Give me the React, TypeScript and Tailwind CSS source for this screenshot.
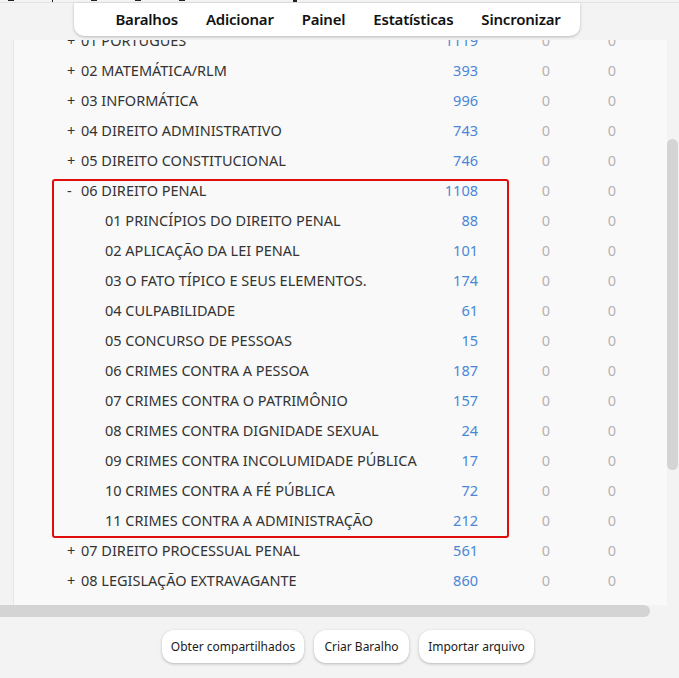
import React from 'react';

type Row = { name: string; count: number; sign?: '+' | '-'; child?: boolean };

const rows: Row[] = [
    { sign: '+', name: '01 PORTUGUÊS', count: 1119 },
    { sign: '+', name: '02 MATEMÁTICA/RLM', count: 393 },
    { sign: '+', name: '03 INFORMÁTICA', count: 996 },
    { sign: '+', name: '04 DIREITO ADMINISTRATIVO', count: 743 },
    { sign: '+', name: '05 DIREITO CONSTITUCIONAL', count: 746 },
    { sign: '-', name: '06 DIREITO PENAL', count: 1108 },
    { child: true, name: '01 PRINCÍPIOS DO DIREITO PENAL', count: 88 },
    { child: true, name: '02 APLICAÇÃO DA LEI PENAL', count: 101 },
    { child: true, name: '03 O FATO TÍPICO E SEUS ELEMENTOS.', count: 174 },
    { child: true, name: '04 CULPABILIDADE', count: 61 },
    { child: true, name: '05 CONCURSO DE PESSOAS', count: 15 },
    { child: true, name: '06 CRIMES CONTRA A PESSOA', count: 187 },
    { child: true, name: '07 CRIMES CONTRA O PATRIMÔNIO', count: 157 },
    { child: true, name: '08 CRIMES CONTRA DIGNIDADE SEXUAL', count: 24 },
    { child: true, name: '09 CRIMES CONTRA INCOLUMIDADE PÚBLICA', count: 17 },
    { child: true, name: '10 CRIMES CONTRA A FÉ PÚBLICA', count: 72 },
    { child: true, name: '11 CRIMES CONTRA A ADMINISTRAÇÃO', count: 212 },
    { sign: '+', name: '07 DIREITO PROCESSUAL PENAL', count: 561 },
    { sign: '+', name: '08 LEGISLAÇÃO EXTRAVAGANTE', count: 860 },
];

const navItems = ['Baralhos', 'Adicionar', 'Painel', 'Estatísticas', 'Sincronizar'];

const DeckRow = ({ row }: { row: Row }) => (
    <div className="flex items-center h-[30px] text-[14.5px]">
        <div className="w-[351px] flex items-center text-[#333333] whitespace-nowrap">
            {row.child ? (
                <span className="pl-[38px]">{row.name}</span>
            ) : (
                <>
                    <span className="w-[14px]">{row.sign}</span>
                    <span>{row.name}</span>
                </>
            )}
        </div>
        <div className="w-[60px] text-right text-[#4a86d8]">{row.count}</div>
        <div className="ml-[38px] w-[60px] text-center text-[#b3b3b3]">0</div>
        <div className="ml-[6px] w-[60px] text-center text-[#b3b3b3]">0</div>
    </div>
);

export default function App() {
    return (
        <div
            className="relative w-[679px] h-[678px] bg-[#f3f3f3] overflow-hidden"
            style={{ fontFamily: '"Noto Sans", "Open Sans", sans-serif' }}
        >
            {/* restinho da barra de cima, cortada */}
            <div className="h-[3px] border-b border-[#e3e3e3] flex items-start gap-[38px] pl-[8px]">
                <span className="w-[6px] h-[1px] bg-[#222]" />
                <span className="w-[1px] h-[2px] bg-[#222]" />
                <span className="w-[6px] h-[1px] bg-[#222]" />
                <span className="w-[6px] h-[1px] bg-[#222]" />
                <span className="w-[6px] h-[1px] bg-[#222]" />
                <span className="w-[4px] h-[2px] bg-[#222] ml-[70px]" />
            </div>

            {/* barra de navegação */}
            <div className="ml-[74px] w-[506px] h-[33px] pl-[22px] bg-white rounded-b-[10px] shadow-[0_1px_3px_rgba(0,0,0,0.25)] flex items-center justify-center gap-[28px] text-[15px] font-semibold tracking-[-0.2px] text-[#111]">
                {navItems.map((item) => (
                    <span key={item}>{item}</span>
                ))}
            </div>

            {/* lista de baralhos */}
            <div className="mt-[4px] flex">
                <div className="ml-[13px] w-[654px] h-[565px] bg-[#f9f9f9] border-l border-[#e6e6e6] overflow-hidden">
                    <div className="-mt-[14px] pl-[53px]">
                        {rows.map((row) => (
                            <DeckRow key={row.name} row={row} />
                        ))}
                    </div>
                </div>
                {/* barra de rolagem vertical */}
                <div className="w-[12px] pt-[99px]">
                    <div className="w-[11px] h-[331px] bg-[#d4d4d4] rounded-full" />
                </div>
            </div>

            {/* barra de rolagem horizontal */}
            <div className="w-[650px] h-[12px] bg-[#d4d4d4] rounded-r-full" />

            {/* botões */}
            <div className="mt-[13px] ml-[162px] flex gap-[10px] text-[12px] text-[#1a1a1a]">
                <button className="h-[33px] w-[142px] bg-white rounded-[12px] shadow-[0_1px_3px_rgba(0,0,0,0.25)]">
                    Obter compartilhados
                </button>
                <button className="h-[33px] w-[95px] bg-white rounded-[12px] shadow-[0_1px_3px_rgba(0,0,0,0.25)]">
                    Criar Baralho
                </button>
                <button className="h-[33px] w-[115px] bg-white rounded-[12px] shadow-[0_1px_3px_rgba(0,0,0,0.25)]">
                    Importar arquivo
                </button>
            </div>

            {/* destaque em vermelho */}
            <div className="absolute left-[52px] top-[179px] w-[457px] h-[359px] border-[2.5px] border-[#e00d0d] rounded-[3px] pointer-events-none" />
        </div>
    );
}
